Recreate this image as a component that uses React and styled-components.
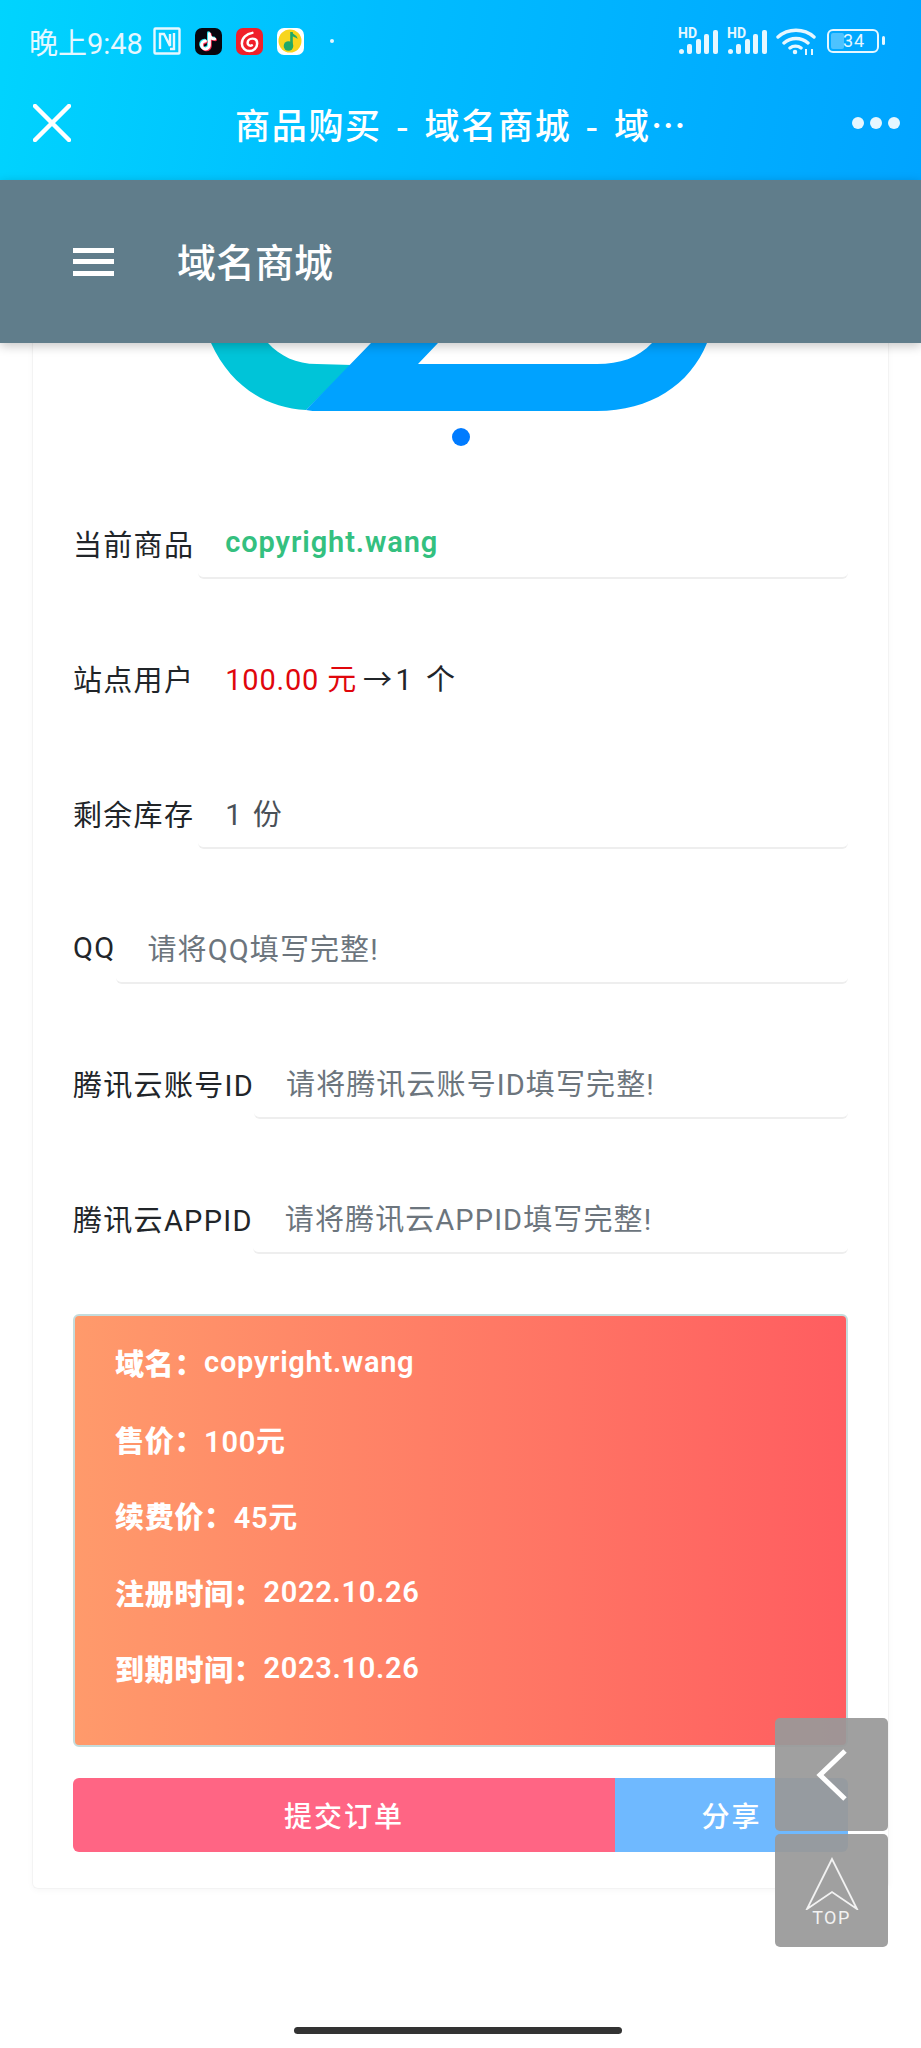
import styled, { createGlobalStyle } from "styled-components";

const GlobalStyle = createGlobalStyle`
  * { box-sizing: border-box; }
  html, body { margin: 0; padding: 0; background: #fff; }
  body { font-family: Roboto, "Noto Sans CJK SC", sans-serif; color: #212529; }
`;

const details = [
  ["域名\uFF1A", "copyright.wang"],
  ["售价\uFF1A", "100元"],
  ["续费价\uFF1A", "45元"],
  ["注册时间\uFF1A", "2022.10.26"],
  ["到期时间\uFF1A", "2023.10.26"],
];

const Signal = () => (
  <SignalIcon width="41" height="35" viewBox="0 -4 41 35" fill="#e6f7ff">
    <text x="0" y="10" fontSize="14" fontWeight="700" fontFamily="Roboto, sans-serif">HD</text>
    <rect x="1" y="21" width="5" height="5" rx="2.5" />
    <rect x="9" y="16" width="5" height="10" rx="2" />
    <rect x="18" y="11" width="5" height="15" rx="2" />
    <rect x="26" y="6" width="5" height="20" rx="2" />
    <rect x="35" y="2" width="5" height="24" rx="2" />
  </SignalIcon>
);

const TiktokNote = "M13 3v13a4.5 4.5 0 1 1-4.5-4.5M13 4c.5 3 3 5 6 5";

const App = () => {
  const rows = [
    { label: "当前商品", value: <Domain>copyright.wang</Domain>, line: true, wide: true },
    { label: "站点用户", value: <><Price>100.00 元</Price><Unit>→1 个</Unit></>, line: false, wide: true },
    { label: "剩余库存", value: <Stock>1 份</Stock>, line: true, wide: true },
    { label: "QQ", value: <Hint>请将QQ填写完整!</Hint>, line: true },
    { label: "腾讯云账号ID", value: <Hint>请将腾讯云账号ID填写完整!</Hint>, line: true },
    { label: "腾讯云APPID", value: <Hint>请将腾讯云APPID填写完整!</Hint>, line: true },
  ];

  return (
    <Page>
      <GlobalStyle />
      <TopBar>
        <StatusBar>
          <StatusLeft>
            <Clock>晚上9:48</Clock>
            <svg width="28" height="28" viewBox="0 0 28 28" fill="none" stroke="#e6f7ff" strokeWidth="2.4">
              <rect x="1.5" y="1.5" width="25" height="25" rx="1" />
              <path d="M7 22V7h4l6 12V7M21 6v16h-4" />
            </svg>
            <AppIcon $bg="#07070f">
              <svg width="21" height="21" viewBox="0 0 24 24" fill="none" strokeWidth="3.4" strokeLinecap="round">
                <path d={TiktokNote} stroke="#25e4ee" transform="translate(-1 -1)" />
                <path d={TiktokNote} stroke="#fe2c55" transform="translate(1 1)" />
                <path d={TiktokNote} stroke="#fff" />
              </svg>
            </AppIcon>
            <AppIcon $bg="#f0202a">
              <svg width="23" height="23" viewBox="0 0 24 24" fill="none" stroke="#fff" strokeWidth="2.6" strokeLinecap="round">
                <path d="M15 3c-6 1-11 5-11 11a8 8 0 0 0 16 0c0-3-2-5-5-5s-5 2-5 4.500 3 3.500 4.500 2.500" />
              </svg>
            </AppIcon>
            <AppIcon $bg="#fff">
              <svg width="26" height="26" viewBox="0 0 26 26">
                <circle cx="13" cy="13" r="11.500" fill="#f7d51d" />
                <path d="M14.500 4v14" stroke="#1fa868" strokeWidth="2.6" />
                <path d="M14.500 4c2 3 6 3 6 7-2-2-4-2-6-3z" fill="#1fa868" />
                <circle cx="11.500" cy="18" r="4.800" fill="#1fa868" />
              </svg>
            </AppIcon>
            <StatusDot />
          </StatusLeft>
          <StatusRight>
            <Signal />
            <Signal />
            <svg width="40" height="28" viewBox="0 0 40 28" fill="none" stroke="#e6f7ff" strokeWidth="3.4" strokeLinecap="round">
              <path d="M2 10c10-9 26-9 36 0M8 16c7-6 17-6 24 0M14 21c3-2.500 8-2.500 11 0" />
              <circle cx="19" cy="25" r="1.500" fill="#e6f7ff" strokeWidth="1.500" />
              <path d="M30 28v-6M36 28v-6" strokeWidth="2" strokeLinecap="butt" />
            </svg>
            <Battery>
              <BatteryFill />
              <BatteryText>34</BatteryText>
            </Battery>
          </StatusRight>
        </StatusBar>
        <TitleRow>
          <svg width="38" height="38" viewBox="0 0 38 38" stroke="#fff" strokeWidth="4.500" strokeLinecap="round">
            <path d="M2 2l34 34M36 2L2 36" />
          </svg>
          <PageTitle lang="zh-CN">商品购买 - 域名商城 - 域…</PageTitle>
          <MoreDots>
            <span />
            <span />
            <span />
          </MoreDots>
        </TitleRow>
      </TopBar>

      <NavBar>
        <Burger>
          <span />
          <span />
          <span />
        </Burger>
        <Brand>域名商城</Brand>
      </NavBar>

      <Card>
        <LogoSlide>
          <svg width="856" height="68" viewBox="33 343 856 68">
            <path d="M211 343C230 385 265 408 306 410L352 365 317 364C296 364 280 356 268 343z" fill="#00c4d8" />
            <path d="M371 343L306 410C310 411 315 411 320 411H597C650 411 690 385 707 343H652C638 358 620 364 597 364H418L438 343z" fill="#00a2ff" />
          </svg>
        </LogoSlide>
        <SlideDot />

        <FormRows>
          {rows.map((row) => (
            <FormRow key={row.label}>
              <RowLabel $wide={row.wide}>{row.label}</RowLabel>
              <RowValue $line={row.line} $wide={row.wide}>{row.value}</RowValue>
            </FormRow>
          ))}
        </FormRows>

        <InfoBox>
          {details.map(([name, value]) => (
            <InfoLine key={name}>
              <InfoName>{name}</InfoName>
              {value}
            </InfoLine>
          ))}
        </InfoBox>

        <Actions>
          <SubmitButton>提交订单</SubmitButton>
          <ShareButton>分享</ShareButton>
        </Actions>
      </Card>

      <FloatStack>
        <FloatButton>
          <svg width="34" height="56" viewBox="0 0 34 56" fill="none" stroke="#fff" strokeWidth="5">
            <path d="M30 4L5 28l25 24" />
          </svg>
        </FloatButton>
        <FloatButton>
          <svg width="54" height="54" viewBox="0 0 54 54" fill="none" stroke="#f2f2f2" strokeWidth="1.800">
            <path d="M27 3L2 53l25-17 25 17z" />
          </svg>
          <TopLabel>TOP</TopLabel>
        </FloatButton>
      </FloatStack>

      <HomeBar />
    </Page>
  );
};

export default App;

const Page = styled.div`
  position: relative;
  min-height: 2048px;
  background: #fff;
`;

const TopBar = styled.header`
  height: 180px;
  background: linear-gradient(100deg, #00d4fe 0%, #00bdff 40%, #00a4ff 100%);
  color: #fff;
`;

const StatusBar = styled.div`
  height: 82px;
  padding: 0 37px 0 29px;
  display: flex;
  align-items: center;
  justify-content: space-between;
`;

const StatusLeft = styled.div`
  display: flex;
  align-items: center;
  gap: 14px;
`;

const StatusRight = styled.div`
  display: flex;
  align-items: center;
  gap: 8px;
`;

const SignalIcon = styled.svg`
  margin: -4px 0;
`;

const Clock = styled.span`
  font-size: 29px;
  color: #e6f7ff;
  margin-right: -4px;
  white-space: nowrap;
`;

const AppIcon = styled.span`
  width: 27px;
  height: 27px;
  border-radius: 7px;
  background: ${(p) => p.$bg};
  display: flex;
  align-items: center;
  justify-content: center;
`;

const StatusDot = styled.span`
  width: 4px;
  height: 4px;
  border-radius: 50%;
  background: #e6f7ff;
  margin-left: 12px;
`;

const Battery = styled.span`
  position: relative;
  width: 52px;
  height: 24px;
  margin: 0 5px 0 3px;
  border: 2.5px solid #e6f7ff;
  border-radius: 6px;
  display: flex;
  align-items: center;
  justify-content: center;

  &::after {
    content: "";
    position: absolute;
    right: -8px;
    top: 5px;
    width: 3px;
    height: 9px;
    border-radius: 2px;
    background: #e6f7ff;
  }
`;

const BatteryFill = styled.span`
  position: absolute;
  left: 2px;
  top: 2px;
  bottom: 2px;
  width: 13px;
  background: rgba(255, 255, 255, 0.3);
  border-radius: 2px;
`;

const BatteryText = styled.span`
  position: relative;
  left: 1px;
  font-size: 18px;
  line-height: 1;
  letter-spacing: 1px;
  color: #e6f7ff;
`;

const TitleRow = styled.div`
  height: 82px;
  padding: 0 21px 0 33px;
  display: flex;
  align-items: center;
  justify-content: space-between;
`;

const PageTitle = styled.h1`
  margin: 0;
  width: 453px;
  font-size: 35px;
  font-weight: 500;
  letter-spacing: 1.7px;
  word-spacing: 4.7px;
  white-space: nowrap;
  font-family: "Noto Sans CJK SC", sans-serif;
`;

const MoreDots = styled.div`
  width: 48px;
  display: flex;
  justify-content: space-between;

  span {
    width: 12px;
    height: 12px;
    border-radius: 50%;
    background: #e6f7ff;
  }
`;

const NavBar = styled.nav`
  position: relative;
  z-index: 2;
  height: 163px;
  padding-left: 73px;
  display: flex;
  align-items: center;
  gap: 63px;
  background: #607d8b;
  box-shadow: 0 3px 10px rgba(0, 0, 0, 0.22);
`;

const Burger = styled.div`
  width: 41px;
  display: flex;
  flex-direction: column;
  gap: 6.5px;

  span {
    height: 5px;
    background: #fff;
  }
`;

const Brand = styled.div`
  margin-bottom: 4px;
  color: #fff;
  font-size: 39px;
  font-weight: 500;
  font-family: "Noto Sans CJK SC", sans-serif;
`;

const Card = styled.main`
  margin: 0 32px;
  height: 1546px;
  padding: 0 40px;
  border: 1px solid #f3f3f3;
  border-top: 0;
  border-radius: 0 0 6px 6px;
  box-shadow: 0 2px 6px rgba(0, 0, 0, 0.03);
`;

const LogoSlide = styled.div`
  height: 68px;
  margin: 0 -40px;
  line-height: 0;
`;

const SlideDot = styled.div`
  width: 18px;
  height: 18px;
  margin: 17px auto 0;
  border-radius: 50%;
  background: #007bff;
`;

const FormRows = styled.div`
  margin-top: 66px;
  display: flex;
  flex-direction: column;
  gap: 68px;
`;

const FormRow = styled.div`
  height: 67px;
  display: flex;
`;

const RowLabel = styled.label`
  align-self: center;
  margin-bottom: 6px;
  padding-right: ${(p) => (p.$wide ? "4px" : "0")};
  font-size: 29px;
  letter-spacing: 1.3px;
  color: #212529;
  white-space: nowrap;
`;

const RowValue = styled.div`
  flex: 1;
  padding: 0 0 6px ${(p) => (p.$wide ? "27px" : "32px")};
  display: flex;
  align-items: center;
  font-size: 29px;
  white-space: pre;
  border-bottom: 2px solid ${(p) => (p.$line ? "#eeeeee" : "transparent")};
  border-radius: 0 0 6px 6px;
`;

const Domain = styled.span`
  color: #34c07f;
  font-weight: 600;
  letter-spacing: 0.9px;
`;

const Price = styled.span`
  color: #e0060c;
  letter-spacing: 0.8px;
`;

const Unit = styled.span`
  margin-left: 6px;
  color: #212529;
  letter-spacing: 3.5px;
`;

const Stock = styled.span`
  color: #495057;
  letter-spacing: 2px;
`;

const Hint = styled.span`
  color: #6c757d;
  letter-spacing: 1.1px;
`;

const InfoBox = styled.section`
  height: 433px;
  margin-top: 60px;
  padding: 8px 40px;
  border: 2px solid #c4dcdc;
  border-radius: 6px;
  display: flex;
  flex-direction: column;
  background: linear-gradient(90deg, #ff9a6b 0%, #ff5d60 100%);
  color: #fff;
`;

const InfoLine = styled.p`
  margin: 0;
  height: 76.500px;
  display: flex;
  align-items: center;
  font-size: 29px;
  font-weight: 600;
  letter-spacing: 0.7px;
  white-space: nowrap;
`;

const InfoName = styled.span`
  font-weight: 800;
`;

const Actions = styled.div`
  margin-top: 31px;
  height: 74px;
  display: flex;
  border-radius: 6px;
  overflow: hidden;
`;

const SubmitButton = styled.button`
  width: 542px;
  border: 0;
  padding: 0;
  background: #ff6584;
  color: #fff;
  font: 500 28px "Noto Sans CJK SC", sans-serif;
  letter-spacing: 2px;
`;

const ShareButton = styled.button`
  flex: 1;
  border: 0;
  padding: 0;
  background: #6fb9ff;
  color: #fff;
  font: 500 28px "Noto Sans CJK SC", sans-serif;
  letter-spacing: 2px;
`;

const FloatStack = styled.div`
  position: absolute;
  top: 1718px;
  right: 33px;
  display: flex;
  flex-direction: column;
  gap: 3px;
`;

const FloatButton = styled.div`
  width: 113px;
  height: 113px;
  border-radius: 5px;
  background: rgba(153, 153, 153, 0.93);
  display: flex;
  flex-direction: column;
  align-items: center;
  justify-content: center;
`;

const TopLabel = styled.span`
  color: #f2f2f2;
  font-size: 18px;
  font-weight: 400;
  line-height: 16px;
  letter-spacing: 1.5px;
`;

const HomeBar = styled.div`
  position: absolute;
  left: 294px;
  bottom: 14px;
  width: 328px;
  height: 7px;
  border-radius: 4px;
  background: #333;
`;
